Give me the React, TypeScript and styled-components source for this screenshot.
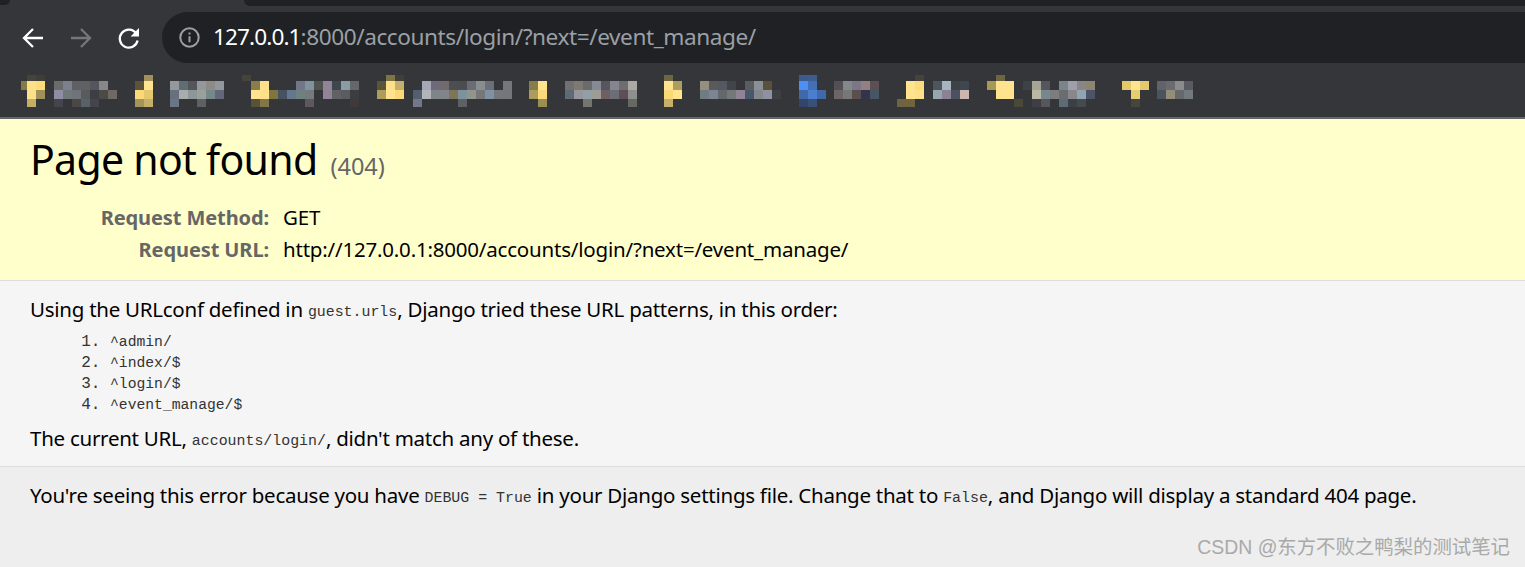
import React from "react";
import styled, { createGlobalStyle } from "styled-components";

type MosaicGroup = { x: number; w?: number; rows: string[][] };

const rowTops = [75, 81, 90, 99];
const rowHeights = [6, 9, 9, 8];

// the blurred bookmark bar, cell by cell
const mosaicGroups: MosaicGroup[] = [
  { x: 21, w: 6, rows: [[], ["#867a45"], [], []] },
  { x: 27, rows: [["#46433a", "#3e3d37"], ["#ffe08a", "#ffdc7a"], ["#ffe08a", "#a0905a"], ["#c4ad64"]] },
  {
    x: 54,
    rows: [
      [],
      ["#6a6b6c", "#7c7f8c", "#5e6063", "#606163", "#55565b", "#85878a"],
      ["#8d8ea4", "#72777c", "#6f7478", "#575c5a", "#3c3d45", "#4c4a44", "#6e6a63"],
      ["#43454c", "", "#4a4846", "#586168", "#45444a"],
    ],
  },
  { x: 135, rows: [["", "#a0905a"], ["#5c5438", "#ffe38f"], ["#fbd876", "#e4c76f"], ["#a3935c", "#c4b06a"]] },
  {
    x: 170,
    rows: [
      [],
      ["#94999b", "#5f6e75", "#55565c", "#94979b", "#8e8a85", "#92979b"],
      ["#687080", "#a9acab", "#8d969b", "#9aa09a", "#76898a", "#64667a"],
      ["#6a7684", "", "", "#5e6063"],
    ],
  },
  { x: 242, rows: [["#46443a"], [], [], []] },
  {
    x: 251,
    rows: [
      [],
      ["#8a7e48", "#ffe08a", "", "", "", "#73758a", "#7d949e", "#505250", "#938398", "#3f464e", "#8a9ca4", "#66676a"],
      ["#ffe38f", "#ffe08a", "#80743f", "#475260", "#64778c", "#6f8081", "#767a7c", "", "#918398", "#606163", "#5b5c60", "#3c3d3f"],
      ["#575338", "#81754a", "", "", "", "", "#5e585c", "", "", "", "", "#3e3a3a"],
    ],
  },
  { x: 377, rows: [["", "#7e7345", "#403e38"], ["#5a5439", "#ffe08a", "#c4b06a"], ["#ae9c5c", "#ffe38f", "#fbd876"], []] },
  {
    x: 413,
    rows: [
      [],
      ["", "#a7a5b8", "#6e6a7a", "#716b70", "#4d4e52", "#4c4d50", "#6c6d74", "#8a8d90", "#6b7078", "", "#75767c"],
      ["#50606e", "#b3b4ba", "#7e8488", "#80858a", "#7c7657", "#7d929c", "#90968c", "#77777a", "#7d93a4", "#75777c", "#75767c"],
      ["#75768a", "", "", "", "", "#5f6064"],
    ],
  },
  { x: 529, rows: [[], ["#877d48", "#ffe38f"], ["#ab9c5c", "#fbd97a"], ["", "#9a8e54"]] },
  {
    x: 565,
    rows: [
      [],
      ["#6f7072", "#7e7a72", "#6e696a", "#868a94", "#55565e", "#85858f", "#6e6e70", "#aaa9a6"],
      ["#5e6a74", "#96969c", "#90a0a6", "#9e9c96", "#6d5f62", "#6c6d76", "#5f4e58", "#8d908c"],
      ["", "", "#757570", "", "", "", "", "#66695f"],
    ],
  },
  { x: 664, rows: [["#6e6640"], ["#ffe38f", "#ae9e5e"], ["#fbd876", "#ffe38f"], ["#c4b06a"]] },
  {
    x: 700,
    rows: [
      [],
      ["#95907e", "#5a5a5c", "#545860", "#414448", "", "#5a5c60", "#8a9096", "#5a5238"],
      ["#707c84", "#7e8494", "#63686a", "#74787a", "#8f8496", "#46586a", "#84888c", "#8f90a2", "#3e3f42"],
      [],
    ],
  },
  {
    x: 799,
    rows: [["#3d5a8c", "#3e5c90"], ["#4d90f5", "#4370b5"], ["#4268a8", "#4a7ed0", "#4268a8"], ["#33466a", "#3a5078"]],
  },
  {
    x: 834,
    rows: [
      [],
      ["#525052", "#82888c", "#7b7688", "#947f82", "#5c5055"],
      ["#6d6468", "#757876", "#5a4e4e", "#33344c", "#475564"],
      [],
    ],
  },
  {
    x: 897,
    rows: [["", "", "#45433a"], ["", "#ffe38f", "#fbdc7a"], ["", "#ffe38f", "#ffe08a"], ["#6e6540", "#6e6540"]],
  },
  { x: 933, rows: [[], ["#4f555c", "#a5b5bf", "#3e4148", "#3e4650"], ["#96a6ae", "#8c8294", "#4a5262", "#cbb6b0"], []] },
  {
    x: 987,
    rows: [["", "#6e6640"], ["#a79854", "#ffe38f", "#ffe38f"], ["", "#ffe38f", "#ffe38f"], ["", "", "", "#4a4836"]],
  },
  {
    x: 1023,
    rows: [
      [],
      ["#3e4145", "#a4a594", "#545560", "", "#78868a", "#a09ea8", "#8a8688", "#8c8570"],
      ["", "#bab8a2", "#76888c", "#7d7d80", "#6a6c70", "#88888a", "#90a4b4", "#4c5268"],
      ["", "#3e3f44", "#56575a", "", "#5e6a74", "#3a3f48", "#454a4c"],
    ],
  },
  { x: 1122, rows: [[], ["#e4c96a", "#ffe38f", "#e4c96e"], ["", "#e6cd72"], ["", "#48463a"]] },
  { x: 1157, rows: [[], ["#626368", "#6a6b70", "#8a8c8c", "#5a5b60"], ["#4b5360", "#948e78", "#66686c", "#727a80"], []] },
];

const patterns = ["^admin/", "^index/$", "^login/$", "^event_manage/$"];

const GlobalStyle = createGlobalStyle`
  html, body {
    margin: 0;
    padding: 0;
    background: #eeeeee;
  }
  body {
    font-family: "Noto Sans", "Open Sans", sans-serif;
    color: #000;
  }
`;

const Page = styled.div`
  position: relative;
  width: 1525px;
  height: 567px;
  overflow: hidden;
  display: flex;
  flex-direction: column;
`;

const TabStrip = styled.div`
  height: 6px;
  background: #35363a;
  display: flex;
  justify-content: space-between;
`;

const LeftTabEdge = styled.div`
  width: 10px;
  height: 5px;
  background: #202124;
  border-bottom-right-radius: 6px;
`;

const RightTabEdge = styled.div`
  width: 1281px;
  background: #202124;
  border-bottom-left-radius: 6px;
`;

const Chrome = styled.div`
  background: #35363a;
  border-bottom: 2px solid #666666;
  height: 111px;
  box-sizing: content-box;
  display: flex;
  flex-direction: column;
`;

const Toolbar = styled.div`
  display: flex;
  align-items: center;
  padding-top: 6px;
  padding-left: 21px;
  height: 51px;
`;

const NavButton = styled.button<{ $gap: number }>`
  display: flex;
  padding: 0;
  border: 0;
  background: none;
  margin-right: ${(p) => p.$gap}px;
`;

const Omnibox = styled.div`
  flex: 1;
  height: 51px;
  margin-right: -40px;
  background: #202124;
  border-radius: 26px;
  display: flex;
  align-items: center;
  padding-left: 17px;
  gap: 13px;
`;

const UrlText = styled.div`
  font-family: "Noto Sans", sans-serif;
  font-size: 22.6px;
  letter-spacing: -0.43px;
  color: #9aa0a6;
  white-space: nowrap;
  padding-bottom: 2px;
`;

const UrlHost = styled.span`
  color: #ffffff;
  letter-spacing: -0.9px;
`;

const BookmarkBar = styled.svg`
  display: block;
  position: absolute;
  top: 0;
  left: 0;
  pointer-events: none;
`;

const Summary = styled.section`
  background: #ffffcc;
  border-bottom: 1px solid #dddddd;
  padding: 12px 30px 0;
  box-sizing: content-box;
  height: 149px;
`;

const Title = styled.h1`
  margin: 0;
  font-weight: 400;
  font-size: 41px;
  line-height: 56px;
  letter-spacing: -0.7px;
  display: flex;
  align-items: baseline;
`;

const StatusCode = styled.span`
  margin-left: 13px;
  font-size: 23.5px;
  letter-spacing: 0;
  color: #666666;
`;

const MetaTable = styled.div`
  margin-top: 8px;
  display: grid;
  grid-template-columns: 239px auto;
  justify-content: start;
  column-gap: 14px;
  row-gap: 0;
  font-size: 20.5px;
  line-height: 32px;
  letter-spacing: -0.2px;
`;

const MetaLabel = styled.div`
  font-weight: 700;
  font-size: 20px;
  text-align: right;
  color: #666666;
  letter-spacing: -0.1px;
`;

const MetaValue = styled.div`
  white-space: nowrap;
  margin-top: -1px;
`;

const Info = styled.section`
  background: #f5f5f5;
  height: 185px;
  padding: 13px 30px 0;
  box-sizing: border-box;
  font-size: 20.5px;
`;

const Line = styled.p<{ $top?: number }>`
  margin: ${(p) => p.$top ?? 0}px 0 0;
  line-height: 30px;
  letter-spacing: -0.26px;
  white-space: nowrap;
`;

const Code = styled.code`
  font-family: "Liberation Mono", "DejaVu Sans Mono", monospace;
  font-size: 14.9px;
  letter-spacing: 0;
  color: #333333;
  vertical-align: 1px;
`;

const PatternList = styled.ol`
  margin: 5px 0 0;
  padding: 0 0 0 80px;
  font-family: "Liberation Mono", "DejaVu Sans Mono", monospace;
  font-size: 14.7px;
  line-height: 21px;
  color: #333333;

  li::marker {
    font-size: 16px;
  }
`;

const Explanation = styled.section`
  flex: 1;
  background: #eeeeee;
  border-top: 1px solid #dddddd;
  padding: 13px 30px 0;
  font-size: 20.5px;
`;

const Watermark = styled.div`
  position: absolute;
  right: 15px;
  bottom: 7px;
  font-family: "Liberation Sans", "Noto Sans CJK SC", sans-serif;
  font-size: 19.4px;
  line-height: 26px;
  color: #a9a9a9;
  white-space: nowrap;
`;

const BackIcon = () => (
  <svg width="24" height="24" viewBox="0 0 24 24" fill="none" stroke="#ffffff" strokeWidth="2.3">
    <path d="M22 12H3M12 3l-9 9 9 9" />
  </svg>
);

const ForwardIcon = () => (
  <svg width="24" height="24" viewBox="0 0 24 24" fill="none" stroke="#75777a" strokeWidth="2.3">
    <path d="M2 12h19M12 3l9 9-9 9" />
  </svg>
);

const ReloadIcon = () => (
  <svg width="24" height="24" viewBox="0 0 24 24" fill="none">
    <path d="M19.2 7.5A9 9 0 1 0 20.6 14.5" stroke="#ffffff" strokeWidth="2.3" />
    <path d="M22 2v8.4h-8.4z" fill="#ffffff" />
  </svg>
);

const InfoIcon = () => (
  <svg width="21" height="21" viewBox="0 0 21 21" fill="none" style={{ flex: "none" }}>
    <circle cx="10.5" cy="10.5" r="9.2" stroke="#9aa0a6" strokeWidth="2" />
    <path d="M9.5 9.2h2v6h-2zM9.5 5.6h2v2h-2z" fill="#9aa0a6" />
  </svg>
);

const App: React.FC = () => {
  return (
    <Page>
      <GlobalStyle />
      <TabStrip>
        <LeftTabEdge />
        <RightTabEdge />
      </TabStrip>
      <Chrome>
        <Toolbar>
          <NavButton $gap={24}>
            <BackIcon />
          </NavButton>
          <NavButton $gap={24}>
            <ForwardIcon />
          </NavButton>
          <NavButton $gap={21}>
            <ReloadIcon />
          </NavButton>
          <Omnibox>
            <InfoIcon />
            <UrlText>
              <UrlHost>127.0.0.1</UrlHost>:8000/accounts/login/?next=/event_manage/
            </UrlText>
          </Omnibox>
        </Toolbar>
      </Chrome>
      <BookmarkBar width="1525" height="119">
        {mosaicGroups.map((group) =>
          group.rows.map((row, r) =>
            row.map((color, c) =>
              color ? (
                <rect
                  key={`${group.x}-${r}-${c}`}
                  x={group.x + c * 9}
                  y={rowTops[r]}
                  width={group.w ?? 9}
                  height={rowHeights[r]}
                  fill={color}
                />
              ) : null,
            ),
          ),
        )}
      </BookmarkBar>
      <Summary>
        <Title>
          Page not found <StatusCode>(404)</StatusCode>
        </Title>
        <MetaTable>
          <MetaLabel>Request Method:</MetaLabel>
          <MetaValue>GET</MetaValue>
          <MetaLabel>Request URL:</MetaLabel>
          <MetaValue>http://127.0.0.1:8000/accounts/login/?next=/event_manage/</MetaValue>
        </MetaTable>
      </Summary>
      <Info>
        <Line>
          Using the URLconf defined in <Code>guest.urls</Code>, Django tried these URL patterns, in this order:
        </Line>
        <PatternList>
          {patterns.map((pattern) => (
            <li key={pattern}>{pattern}</li>
          ))}
        </PatternList>
        <Line $top={7}>
          The current URL, <Code>accounts/login/</Code>, didn't match any of these.
        </Line>
      </Info>
      <Explanation>
        <Line>
          You're seeing this error because you have <Code>DEBUG = True</Code> in your Django settings file. Change that
          to <Code>False</Code>, and Django will display a standard 404 page.
        </Line>
      </Explanation>
      <Watermark>CSDN @东方不败之鸭梨的测试笔记</Watermark>
    </Page>
  );
};

export default App;
